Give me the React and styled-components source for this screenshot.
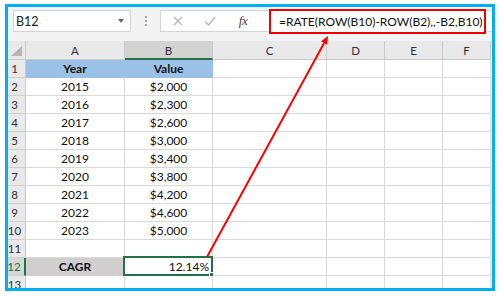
import React from 'react';
import styled, { createGlobalStyle } from 'styled-components';

const Global = createGlobalStyle`
  html, body { margin: 0; padding: 0; background: #ffffff; }
  body { font-family: Lato, "Open Sans", sans-serif; color: #000; }
  #root { width: 500px; height: 297px; }
`;

const Page = styled.div`
  position: relative;
  width: 500px;
  height: 297px;
  padding: 4px 0 0 5px;
  box-sizing: border-box;
`;

const Frame = styled.div`
  box-sizing: border-box;
  width: 490px;
  height: 287px;
  border: 3px solid #00b0f0;
  background: #fff;
  overflow: hidden;
  display: flex;
  flex-direction: column;
`;

const Toolbar = styled.div`
  flex: none;
  height: 34px;
  box-sizing: border-box;
  padding: 3px 0 0 5px;
  background: #f3f3f3;
  display: flex;
  align-items: flex-start;
`;

const NameBox = styled.div`
  box-sizing: border-box;
  width: 118px;
  height: 22px;
  background: #fff;
  border: 1px solid #d4d4d4;
  display: flex;
  align-items: center;
  justify-content: space-between;
  padding: 0 6px 0 2px;
  font-size: 12.5px;
  color: #222;
`;

const DropTriangle = styled.span`
  width: 0;
  height: 0;
  border-left: 3.5px solid transparent;
  border-right: 3.5px solid transparent;
  border-top: 4px solid #6a6a6a;
`;

const Grip = styled.div`
  width: 29px;
  height: 22px;
  display: flex;
  flex-direction: column;
  align-items: center;
  justify-content: center;
  gap: 2px;
`;

const GripDot = styled.span`
  width: 2px;
  height: 2px;
  background: #a6a6a6;
`;

const FormulaBar = styled.div`
  flex: 1;
  box-sizing: border-box;
  height: 22px;
  background: #fff;
  border: 1px solid #d4d4d4;
  border-right: none;
  display: flex;
  align-items: flex-start;
  overflow: visible;
`;

const IconSlot = styled.div`
  width: ${p => p.$w}px;
  height: 20px;
  display: flex;
  align-items: center;
  justify-content: center;
  flex: none;
`;

const Fx = styled.span`
  font-family: "Liberation Serif", "DejaVu Serif", serif;
  font-style: italic;
  font-size: 13px;
  color: #444;
  letter-spacing: -0.5px;
`;

const FormulaInput = styled.div`
  box-sizing: border-box;
  margin: -2px 0 0 9px;
  width: 217px;
  height: 25px;
  border: 2px solid #f00000;
  padding: 0 0 0 8px;
  display: flex;
  align-items: center;
  font-size: 12px;
  white-space: nowrap;
  color: #111;
  background: #fff;
`;

const Sheet = styled.div`
  display: grid;
  grid-template-columns: 18px 99px 88px 114px 58px 58px 48px;
  grid-template-rows: 19px repeat(13, 18px);
`;

const ColHead = styled.div`
  box-sizing: border-box;
  background: ${p => (p.$active ? '#d3d3d3' : '#e9e9e9')};
  border-right: 1px solid #c9c9c9;
  border-bottom: ${p => (p.$active ? '2px solid #217346' : '1px solid #c9c9c9')};
  display: flex;
  align-items: center;
  justify-content: center;
  font-size: 11.5px;
  color: #333;
  padding-top: 1px;
`;

const Corner = styled.div`
  box-sizing: border-box;
  background: #e9e9e9;
  border-right: 1px solid #c9c9c9;
  border-bottom: 1px solid #c9c9c9;
  position: relative;
`;

const CornerTri = styled.span`
  position: absolute;
  right: 3px;
  bottom: 3px;
  width: 0;
  height: 0;
  border-left: 11px solid transparent;
  border-bottom: 10px solid #b7b7b7;
`;

const RowHead = styled.div`
  box-sizing: border-box;
  background: ${p => (p.$active ? '#d6d6d6' : '#e9e9e9')};
  border-right: ${p => (p.$active ? '2px solid #217346' : '1px solid #c9c9c9')};
  border-bottom: 1px solid #d0d0d0;
  display: flex;
  align-items: center;
  justify-content: center;
  padding-right: 4px;
  font-size: 11.5px;
  color: ${p => (p.$active ? '#217346' : '#333')};
`;

const Cell = styled.div`
  box-sizing: border-box;
  position: relative;
  background: ${p => p.$fill || '#fff'};
  border-right: 1px solid ${p => p.$fill || '#d9d9d9'};
  border-bottom: 1px solid ${p => p.$fill || '#d9d9d9'};
  display: flex;
  align-items: center;
  justify-content: ${p => (p.$align === 'right' ? 'flex-end' : 'center')};
  padding: ${p => (p.$align === 'right' ? '0 3px 0 0' : '0')};
  font-size: 12px;
  font-weight: ${p => (p.$bold ? 700 : 400)};
  color: #111;
  white-space: nowrap;
`;

const Selection = styled.span`
  position: absolute;
  left: -2px;
  top: -2px;
  right: -1px;
  bottom: -1px;
  border: 2px solid #217346;
  pointer-events: none;
`;

const FillHandle = styled.span`
  position: absolute;
  right: -3px;
  bottom: -3px;
  width: 5px;
  height: 5px;
  background: #217346;
  border: 1px solid #fff;
  box-sizing: content-box;
  margin: -1px;
`;

const ArrowLayer = styled.svg`
  position: absolute;
  left: 0;
  top: 0;
  width: 500px;
  height: 297px;
  pointer-events: none;
`;

const columns = ['A', 'B', 'C', 'D', 'E', 'F'];
const data = [
  ['2015', '$2,000'],
  ['2016', '$2,300'],
  ['2017', '$2,600'],
  ['2018', '$3,000'],
  ['2019', '$3,400'],
  ['2020', '$3,800'],
  ['2021', '$4,200'],
  ['2022', '$4,600'],
  ['2023', '$5,000'],
];

function Row({ n, cells, active }) {
  return (
    <>
      <RowHead $active={active}>{n}</RowHead>
      {cells}
    </>
  );
}

const EmptyRest = ({ from }) =>
  columns.slice(from).map(c => <Cell key={c} />);

export default function App() {
  const rows = [];
  rows.push(
    <Row
      key={1}
      n={1}
      cells={
        <>
          <Cell $fill="#9bc2e6" $bold>Year</Cell>
          <Cell $fill="#9bc2e6" $bold>Value</Cell>
          <EmptyRest from={2} />
        </>
      }
    />
  );
  data.forEach((d, i) => {
    rows.push(
      <Row
        key={i + 2}
        n={i + 2}
        cells={
          <>
            <Cell>{d[0]}</Cell>
            <Cell>{d[1]}</Cell>
            <EmptyRest from={2} />
          </>
        }
      />
    );
  });
  rows.push(<Row key={11} n={11} cells={<EmptyRest from={0} />} />);
  rows.push(
    <Row
      key={12}
      n={12}
      active
      cells={
        <>
          <Cell $fill="#d0cece" $bold>CAGR</Cell>
          <Cell $align="right">
            12.14%
            <Selection />
            <FillHandle />
          </Cell>
          <EmptyRest from={2} />
        </>
      }
    />
  );
  rows.push(<Row key={13} n={13} cells={<EmptyRest from={0} />} />);

  const tip = [328, 36];
  const ux = 0.48, uy = -0.877;
  const bx = tip[0] - 8 * ux, by = tip[1] - 8 * uy;
  const px = 0.877, py = 0.48;
  const head = `${tip[0]},${tip[1]} ${bx + 3.5 * px},${by + 3.5 * py} ${bx - 3.5 * px},${by - 3.5 * py}`;

  return (
    <Page>
      <Global />
      <Frame>
        <Toolbar>
          <NameBox>
            B12
            <DropTriangle />
          </NameBox>
          <Grip>
            <GripDot />
            <GripDot />
            <GripDot />
          </Grip>
          <FormulaBar>
            <IconSlot $w={33}>
              <svg width="10" height="10" viewBox="0 0 10 10">
                <path d="M1 1 L9 9 M9 1 L1 9" stroke="#b3b3b3" strokeWidth="1.3" fill="none" />
              </svg>
            </IconSlot>
            <IconSlot $w={32}>
              <svg width="12" height="10" viewBox="0 0 12 10">
                <path d="M1 5.5 L4.5 9 L11 1" stroke="#b3b3b3" strokeWidth="1.3" fill="none" />
              </svg>
            </IconSlot>
            <IconSlot $w={34}>
              <Fx>fx</Fx>
            </IconSlot>
            <FormulaInput>=RATE(ROW(B10)-ROW(B2),,-B2,B10)</FormulaInput>
          </FormulaBar>
        </Toolbar>
        <Sheet>
          <Corner>
            <CornerTri />
          </Corner>
          {columns.map(c => (
            <ColHead key={c} $active={c === 'B'}>{c}</ColHead>
          ))}
          {rows}
        </Sheet>
      </Frame>
      <ArrowLayer viewBox="0 0 500 297">
        <line x1="207" y1="257" x2={bx} y2={by} stroke="#ff0000" strokeWidth="2" />
        <polygon points={head} fill="#ff0000" />
      </ArrowLayer>
    </Page>
  );
}
